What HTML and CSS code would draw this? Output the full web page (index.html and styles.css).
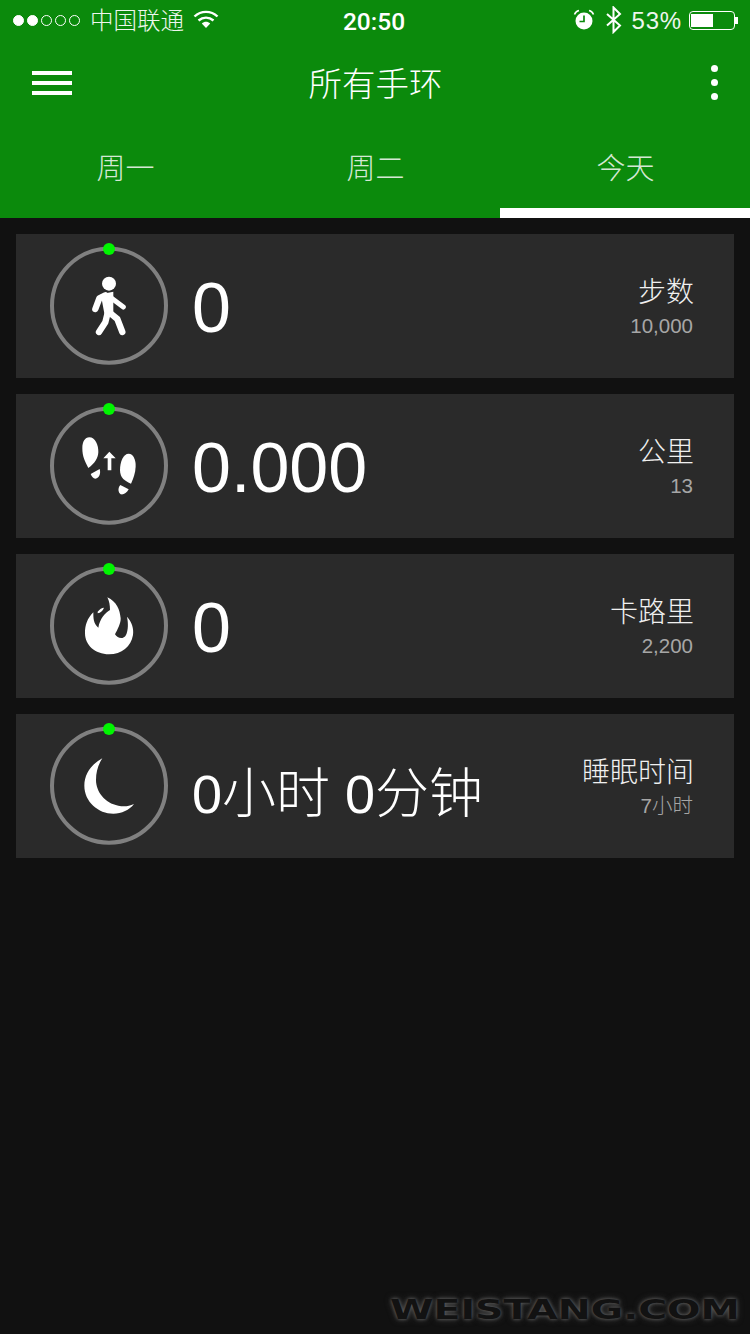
FILE: index.html
```html
<!DOCTYPE html>
<html lang="zh">
<head>
<meta charset="utf-8">
<title>所有手环</title>
<link rel="stylesheet" href="styles.css">
</head>
<body>
<div class="phone">
  <div class="top">
    <div class="status">
      <div class="status-left">
        <div class="signal"><i class="on"></i><i class="on"></i><i></i><i></i><i></i></div>
        <span class="carrier">中国联通</span>
        <svg class="wifi" width="26" height="20" viewBox="0 0 26 20"><path d="M1.5 7.5C8 1.3 18 1.3 24.5 7.5" fill="none" stroke="#fff" stroke-width="2.4"/><path d="M5.5 11.5C10 7.6 16 7.6 20.5 11.5" fill="none" stroke="#fff" stroke-width="2.4"/><path d="M8.8 14.4C11.3 12.3 14.7 12.3 17.2 14.4L13 19Z" fill="#fff"/></svg>
      </div>
      <div class="time">20:50</div>
      <div class="status-right">
        <svg width="22" height="22" viewBox="0 0 22 22"><circle cx="11" cy="12" r="8.5" fill="#fff"/><path d="M11 6.5V12.5H6.5" fill="none" stroke="#0b8a0c" stroke-width="1.7"/><path d="M1.5 5.5C2.5 3 4 2 6 1.5M20.5 5.5C19.5 3 18 2 16 1.5" fill="none" stroke="#fff" stroke-width="1.6"/></svg>
        <svg class="bt" width="18" height="28" viewBox="0 0 18 28"><path d="M2 8L15 19.5L8.5 26V1.5L15 8L2 19.5" fill="none" stroke="#fff" stroke-width="2"/></svg>
        <span class="pct">53%</span>
        <div class="battery"><div class="battery-fill"></div></div>
      </div>
    </div>
    <div class="header">
      <div class="menu"><i></i><i></i><i></i></div>
      <div class="title">所有手环</div>
      <div class="more"><i></i><i></i><i></i></div>
    </div>
    <div class="tabs">
      <div class="tab">周一</div>
      <div class="tab">周二</div>
      <div class="tab active">今天</div>
    </div>
  </div>

  <div class="list">
    <div class="card">
      <svg class="gauge" width="160" height="140" viewBox="0 0 480 420">
        <circle class="ring" cx="237" cy="212" r="171"/><circle class="dot" cx="237" cy="42" r="18"/>
        <circle cx="237" cy="146" r="21" fill="#fff"/>
        <path d="M212 178L250 170L250 240L224 240Z" fill="#fff"/>
        <path d="M226 181L208 190L196 222" class="limb"/>
        <path d="M240 186L280 216" class="limb thin"/>
        <path d="M232 238L226 262L207 291" class="limb"/>
        <path d="M238 232L262 252L277 291" class="limb"/>
      </svg>
      <div class="value big">0</div>
      <div class="meta"><div class="label">步数</div><div class="sub">10,000</div></div>
    </div>
    <div class="card">
      <svg class="gauge" width="160" height="140" viewBox="0 0 480 420">
        <circle class="ring" cx="237" cy="212" r="171"/><circle class="dot" cx="237" cy="42" r="18"/>
        <path fill="#fff" d="M178 127C195 127 206 150 205 172C204 190 195 205 175 219C165 200 157 185 157 160C157 140 165 127 178 127Z"/>
        <path fill="#fff" d="M182 237L209 222C213 235 208 250 196 251C190 251 185 245 182 237Z"/>
        <path fill="#fff" d="M296 176C310 176 318 195 317 215C316 235 310 250 303 266C285 258 270 250 270 225C270 200 280 176 296 176Z"/>
        <path fill="#fff" d="M271 270L296 283C290 295 280 300 272 298C265 293 262 280 271 270Z"/>
        <path fill="#fff" d="M238 170L257 190L244 190L244 226L233 226L233 190L220 190Z"/>
      </svg>
      <div class="value big">0.000</div>
      <div class="meta"><div class="label">公里</div><div class="sub">13</div></div>
    </div>
    <div class="card">
      <svg class="gauge" width="160" height="140" viewBox="0 0 480 420">
        <circle class="ring" cx="237" cy="212" r="171"/><circle class="dot" cx="237" cy="42" r="18"/>
        <path fill="#fff" d="M232 127C260 140 270 165 272 190C273 205 262 225 255 238C262 250 280 255 288 240C295 225 295 205 291 185C305 200 312 220 309 240C303 275 275 298 237 298C195 298 165 270 165 235C165 210 172 190 190 172C190 190 190 205 205 218C210 190 225 175 240 165C240 150 238 140 232 127Z"/>
        <path fill="#fff" d="M203 170C210 162 215 158 222 158C218 168 212 173 203 175Z"/>
      </svg>
      <div class="value big">0</div>
      <div class="meta"><div class="label">卡路里</div><div class="sub">2,200</div></div>
    </div>
    <div class="card">
      <svg class="gauge" width="160" height="140" viewBox="0 0 480 420">
        <circle class="ring" cx="237" cy="212" r="171"/><circle class="dot" cx="237" cy="42" r="18"/>
        <path fill="#fff" d="M217 130C180 150 163 180 163 212C163 260 205 296 250 296C275 296 298 285 312 267C295 275 280 275 265 272C225 265 198 230 198 195C198 170 205 148 217 130Z"/>
      </svg>
      <div class="value mid">0小时 0分钟</div>
      <div class="meta"><div class="label">睡眠时间</div><div class="sub">7小时</div></div>
    </div>
  </div>
  <div class="watermark">WEISTANG.COM</div>
</div>
</body>
</html>
```
FILE: styles.css
```css
* { box-sizing: border-box; }
html, body { margin: 0; padding: 0; }
body {
  width: 750px;
  height: 1334px;
  background: #111;
  color: #fff;
  font-family: "Liberation Sans", "Noto Sans CJK SC", sans-serif;
  overflow: hidden;
}
.phone { position: relative; width: 750px; height: 1334px; overflow: hidden; }
.top { background: #0b8a0c; }

.status {
  height: 40px;
  display: grid;
  grid-template-columns: 1fr auto 1fr;
  align-items: center;
  padding: 0 15px 0 13px;
}
.status-left { display: flex; align-items: center; }
.signal { display: flex; gap: 3px; }
.signal i {
  width: 11px;
  height: 11px;
  border-radius: 50%;
  border: 1px solid #fff;
}
.signal i.on { background: #fff; }
.carrier { margin-left: 10px; padding-top: 2px; font-size: 23.5px; font-weight: 300; line-height: 30px; color: #eef6ee; }
.wifi { margin-left: 9px; margin-top: -2px; }
.time { font-family: Roboto, "Liberation Sans", sans-serif; font-size: 24.5px; font-weight: 500; line-height: 30px; padding-top: 3px; }
.status-right { display: flex; align-items: center; justify-content: flex-end; }
.bt { margin-left: 10px; }
.pct { margin-left: 9px; padding-top: 2px; font-size: 24px; line-height: 30px; letter-spacing: .8px; color: #eef6ee; }
.battery {
  position: relative;
  margin-left: 7px;
  width: 46px;
  height: 19px;
  border: 1px solid #fff;
  border-radius: 4px;
  padding: 2px 1px;
}
.battery::after {
  content: "";
  position: absolute;
  left: 45px;
  top: 5px;
  width: 3px;
  height: 7px;
  background: #fff;
}
.battery-fill { width: 22px; height: 100%; background: #fff; }

.header {
  height: 88px;
  display: grid;
  grid-template-columns: 1fr auto 1fr;
  align-items: center;
  padding: 0 32px;
}
.menu { display: flex; flex-direction: column; gap: 6px; width: 40px; margin-top: -2px; }
.menu i { display: block; height: 4px; background: #fff; }
.title { font-size: 33.5px; font-weight: 300; line-height: 44px; padding: 2px 0 0 1px; }
.more { justify-self: end; display: flex; flex-direction: column; gap: 7px; margin-top: -4px; }
.more i { display: block; width: 7px; height: 7px; border-radius: 50%; background: #fff; }

.tabs { display: grid; grid-template-columns: repeat(3, 1fr); }
.tab {
  height: 90px;
  padding: 0 0 14px 1px;
  display: flex;
  align-items: center;
  justify-content: center;
  font-size: 29px;
  font-weight: 300;
  color: #d4e8d4;
}
.tab.active { border-bottom: 10px solid #fff; padding-bottom: 4px; }

.list { padding: 16px; display: flex; flex-direction: column; gap: 16px; }
.card {
  height: 144px;
  padding: 1px 40px 0 14px;
  background: #2a2a2a;
  display: flex;
  align-items: flex-start;
}
.gauge { flex: none; display: block; }
.ring { fill: none; stroke: #808080; stroke-width: 12; }
.dot { fill: #00f500; }
.limb { fill: none; stroke: #fff; stroke-width: 19; stroke-linecap: round; stroke-linejoin: round; }
.limb.thin { stroke-width: 15; }

.value { margin-left: 2px; flex: 1; white-space: nowrap; }
.value.big { font-size: 70px; line-height: 80px; padding-top: 33px; }
.value.mid { font-size: 54px; font-weight: 300; line-height: 70px; padding-top: 44px; }
.meta { text-align: right; padding-top: 39px; flex: none; }
.label { font-size: 28px; font-weight: 300; line-height: 37px; color: #f0f0f0; }
.sub { font-size: 20.5px; font-weight: 300; line-height: 30px; color: #a6a6a6; padding-right: 1px; }

.watermark {
  position: absolute;
  left: 390px;
  top: 1295px;
  width: 346px;
  font-family: "DejaVu Sans", sans-serif;
  font-weight: 700;
  font-size: 27px;
  line-height: 30px;
  white-space: nowrap;
  color: #121212;
  text-shadow: 0 0 3px #666, 0 0 6px #444;
  transform: scaleX(1.46);
  transform-origin: left center;
}
```
